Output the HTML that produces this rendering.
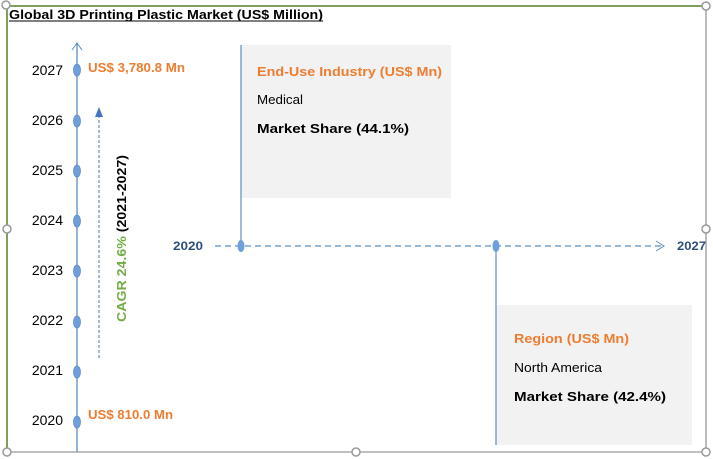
<!DOCTYPE html>
<html><head><meta charset="utf-8"><style>
html,body{margin:0;padding:0;background:#fff;}
body{width:713px;height:459px;position:relative;overflow:hidden;font-family:"Liberation Sans",sans-serif;}
svg{position:absolute;left:0;top:0;}
</style></head><body>
<svg width="713" height="459" viewBox="0 0 713 459" xmlns="http://www.w3.org/2000/svg" font-family="Liberation Sans, sans-serif">
<rect x="241" y="45" width="210" height="153" fill="#f2f2f2"/>
<rect x="496" y="305" width="196" height="140" fill="#f2f2f2"/>
<line x1="7" y1="6" x2="706" y2="6" stroke="#7f9f5f" stroke-width="2"/>
<line x1="7" y1="6" x2="7" y2="452" stroke="#7f9f5f" stroke-width="2"/>
<line x1="706" y1="6" x2="706" y2="452" stroke="#999" stroke-width="1.3"/>
<line x1="7" y1="452" x2="706" y2="452" stroke="#999" stroke-width="1.3"/>
<g fill="#fff" stroke="#999" stroke-width="1.5">
<circle cx="6" cy="5" r="4"/><circle cx="706" cy="6" r="4"/><circle cx="7" cy="229" r="4"/><circle cx="706" cy="229" r="4"/>
<circle cx="7" cy="452" r="4"/><circle cx="356" cy="452" r="4"/><circle cx="706" cy="452" r="4"/>
</g>
<text x="9" y="19" font-size="13" font-weight="bold" fill="#000" textLength="314" lengthAdjust="spacingAndGlyphs">Global 3D Printing Plastic Market (US$ Million)</text>
<line x1="9" y1="21" x2="323" y2="21" stroke="#000" stroke-width="1"/>
<line x1="77" y1="43" x2="77" y2="452" stroke="#5b8fbf" stroke-width="1.3"/>
<polyline points="72,50 77,43 82,50" fill="none" stroke="#5b8fbf" stroke-width="1"/>
<g fill="#6f9fd8" stroke="#5b8fc8" stroke-width="0.8">
<ellipse cx="77" cy="70" rx="3.5" ry="6"/><ellipse cx="77" cy="121" rx="3.5" ry="6"/><ellipse cx="77" cy="171" rx="3.5" ry="6"/><ellipse cx="77" cy="221" rx="3.5" ry="6"/>
<ellipse cx="77" cy="271" rx="3.5" ry="6"/><ellipse cx="77" cy="322" rx="3.5" ry="6"/><ellipse cx="77" cy="372" rx="3.5" ry="6"/><ellipse cx="77" cy="422" rx="3.5" ry="6"/>
</g>
<g font-size="14" fill="#000" text-anchor="end">
<text x="63" y="75">2027</text><text x="63" y="125">2026</text><text x="63" y="175">2025</text><text x="63" y="225">2024</text>
<text x="63" y="275">2023</text><text x="63" y="325">2022</text><text x="63" y="375">2021</text><text x="63" y="425">2020</text>
</g>
<text x="88" y="72" font-size="12.5" font-weight="bold" fill="#ed7d31" textLength="97" lengthAdjust="spacingAndGlyphs">US$ 3,780.8 Mn</text>
<text x="88" y="419" font-size="12.5" font-weight="bold" fill="#ed7d31" textLength="85" lengthAdjust="spacingAndGlyphs">US$ 810.0 Mn</text>
<line x1="99" y1="115" x2="99" y2="360" stroke="#4a72b0" stroke-width="1" stroke-dasharray="3,2"/>
<polygon points="95,117 99,107 103,117" fill="#4472c4"/>
<text transform="translate(126,322) rotate(-90)" font-size="13" font-weight="bold" textLength="167" lengthAdjust="spacingAndGlyphs"><tspan fill="#70ad47">CAGR 24.6% </tspan><tspan fill="#000">(2021-2027)</tspan></text>
<line x1="215" y1="246" x2="664" y2="246" stroke="#5b8fbf" stroke-width="1.2" stroke-dasharray="6,4"/>
<polyline points="656,241 664,246 656,251" fill="none" stroke="#5b8fbf" stroke-width="1"/>
<text x="173" y="250" font-size="11.5" font-weight="bold" fill="#2f4f7f" textLength="30" lengthAdjust="spacingAndGlyphs">2020</text>
<text x="677" y="250" font-size="11.5" font-weight="bold" fill="#2f4f7f" textLength="29" lengthAdjust="spacingAndGlyphs">2027</text>
<line x1="241" y1="45" x2="241" y2="246" stroke="#5b8fbf" stroke-width="1.2"/>
<line x1="496" y1="246" x2="496" y2="445" stroke="#5b8fbf" stroke-width="1.2"/>
<ellipse cx="241" cy="246" rx="3.5" ry="6" fill="#6f9fd8"/>
<ellipse cx="496" cy="246" rx="3.5" ry="6" fill="#6f9fd8"/>
<text x="257" y="76" font-size="13" font-weight="bold" fill="#ed7d31" textLength="185" lengthAdjust="spacingAndGlyphs">End-Use Industry (US$ Mn)</text>
<text x="257" y="104" font-size="13" fill="#000" textLength="46" lengthAdjust="spacingAndGlyphs">Medical</text>
<text x="257" y="133" font-size="13" font-weight="bold" fill="#000" textLength="152" lengthAdjust="spacingAndGlyphs">Market Share (44.1%)</text>
<text x="514" y="343" font-size="13" font-weight="bold" fill="#ed7d31" textLength="115" lengthAdjust="spacingAndGlyphs">Region (US$ Mn)</text>
<text x="514" y="372" font-size="13" fill="#000" textLength="88" lengthAdjust="spacingAndGlyphs">North America</text>
<text x="514" y="401" font-size="13" font-weight="bold" fill="#000" textLength="152" lengthAdjust="spacingAndGlyphs">Market Share (42.4%)</text>
</svg>
</body></html>
